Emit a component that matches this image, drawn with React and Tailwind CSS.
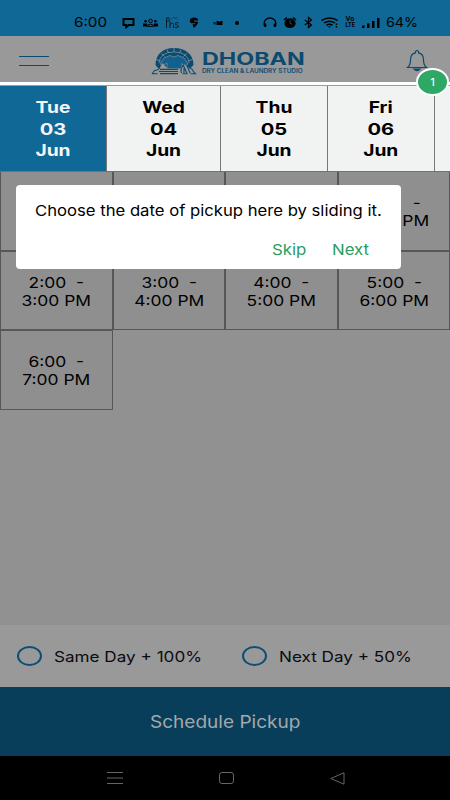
import clsx from 'clsx';

const days = [
    { day: 'Tue', date: '03', month: 'Jun', width: 'w-[107px]', active: true },
    { day: 'Wed', date: '04', month: 'Jun', width: 'w-[114px]' },
    { day: 'Thu', date: '05', month: 'Jun', width: 'w-[107px]' },
    { day: 'Fri', date: '06', month: 'Jun', width: 'w-[106.5px]' },
];

const slots = [
    [],
    [],
    [],
    [':00  -', 'PM'],
    ['2:00  -', '3:00 PM'],
    ['3:00  -', '4:00 PM'],
    ['4:00  -', '5:00 PM'],
    ['5:00  -', '6:00 PM'],
    ['6:00  -', '7:00 PM'],
];

function StatusBar() {
    return (
        <div className="h-9 bg-[#106897] flex items-start pt-[16px] text-black">
            <span className="ml-[74px] w-[48px] h-[13px] text-[13.5px] leading-[13px] origin-left scale-x-[1.13]">6:00</span>
            {/* message */}
            <svg className="w-[13px] h-[13px]" viewBox="0 0 13 13" fill="none" stroke="currentColor" strokeWidth="2">
                <path d="M1.5 3h10v6H6.800L4.200 11.200V9H1.500z" />
            </svg>
            {/* group */}
            <svg className="ml-[8px] w-[15px] h-[13px]" viewBox="0 0 15 13" fill="currentColor">
                <circle cx="2.6" cy="5.2" r="1.3" />
                <circle cx="12.4" cy="5.2" r="1.3" />
                <circle cx="7.5" cy="5" r="1.8" fill="none" stroke="currentColor" />
                <path d="M0 7.5h4v3H0zM11 7.5h4v3h-4z" />
                <path d="M4.4 10.4V9.2q3.1-2.2 6.2 0v1.2z" fill="none" stroke="currentColor" />
            </svg>
            <svg className="ml-[7px] w-[15px] h-[13px] opacity-70" viewBox="0 0 15 13" fill="none" stroke="currentColor">
                <path d="M1.500 12V2q3-1 3 1.200T1.500 5.500M5 12V5M5 8.500q3-2.500 3.500 0V12M13.500 7q-3-1-3.500.7 0 1.300 2 1.300 2 .5 1.300 2-1 1-3.500.300" />
                <path d="M6.500 3l2-1.500 1.500 1 1.500-1L13 3.500" strokeDasharray="1 1" />
            </svg>
            {/* pin */}
            <svg className="ml-[9px] w-[10px] h-[13px]" viewBox="0 0 10 13" fill="currentColor">
                <path d="M5 1.500c2.300 0 4.200 1.200 4.200 3H5v1.200h4Q9 8.500 4.800 12 3.600 9.500 3.600 8.300H6.500V7.200H2Q.6 6 .8 4.200 1.500 1.500 5 1.500z" />
            </svg>
            <svg className="ml-[14px] w-[10px] h-[13px]" viewBox="0 0 10 13" fill="currentColor">
                <path d="M0 6h3v2.500H0z" opacity=".5" />
                <path d="M3.500 5h2l1 1 1-1H9.500v4H3.500z" />
            </svg>
            <span className="ml-[12px] mt-[4.500px] size-[4px] rounded-full bg-black" />
            {/* headphones */}
            <svg className="ml-[24px] w-[14px] h-[13px]" viewBox="0 0 14 13" fill="none" stroke="currentColor" strokeWidth="1.300">
                <path d="M1.200 10V7a5.800 5 0 0 1 11.600 0v3" />
                <path d="M2.200 7.500v3.500M11.800 7.500v3.500" strokeWidth="2.200" />
            </svg>
            {/* alarm */}
            <svg className="ml-[6px] w-[14px] h-[13px]" viewBox="0 0 14 13" fill="currentColor">
                <ellipse cx="7" cy="7.200" rx="5.600" ry="4.900" />
                <path d="M1 4 4 1.500M13 4 10 1.500" stroke="currentColor" strokeWidth="1.600" />
                <path d="M7 4.500v2.800l2 1" fill="none" stroke="#106897" strokeWidth=".8" />
            </svg>
            <svg className="ml-[7px] w-[9px] h-[13px]" viewBox="0 0 9 13" fill="none" stroke="currentColor" strokeWidth="1.200">
                <path d="M.8 4 7.500 9 4.500 11.500v-10L7.500 4 .8 9" />
            </svg>
            {/* wifi */}
            <svg className="ml-[8px] w-[18px] h-[13px]" viewBox="0 0 18 13" fill="none" stroke="currentColor" strokeWidth="1.500">
                <path d="M.5 4.500q8-5 16 0M3 7q5.500-3.700 11 0M5.500 9.300q3-2 6 0" />
                <path d="m7 10.500 1.500 1.500 1.500-1.500z" fill="currentColor" stroke="none" />
                <path d="M15.500 7.500v1.500M15.500 10v1.500" strokeWidth="1.500" />
            </svg>
            <span className="ml-[6px] w-[10px] h-[12px] flex flex-col items-center text-[6px] leading-[6px] font-bold">
                <span className="scale-x-[1.100]">Vo</span>
                <span className="scale-x-[.900]">LTE</span>
            </span>
            {/* signal */}
            <svg className="ml-[7px] w-[18px] h-[13px]" viewBox="0 0 18 13" fill="currentColor">
                <path d="M0 9.500h2.500V12H0zM5 7.500h2.500V12H5zM10 5h2.500v7H10zM15 2h2.500v10H15z" />
            </svg>
            <span className="ml-[6px] h-[13px] text-[13.500px] leading-[13px] origin-left scale-x-[1.060]">64%</span>
        </div>
    );
}

function LogoMark() {
    return (
        <svg className="w-[46px] h-[28px]" viewBox="0 0 46 28" fill="none" stroke="#0b4b70">
            <path d="M4.500 18C4.500 7 12 1 23 1s19.500 6 19.500 17l-3 3H7z" fill="#0b4b70" stroke="none" />
            <path d="M8 16Q9 5 23 5t15 11" stroke="#8698a1" strokeWidth=".7" />
            <path d="M10.500 6.500l3 3M16 2.500l1.500 3.500M23 1v4M30 2.500L28.500 6M35.500 6.500l-3 3M5 12.500l4.500 1.500M41.500 12.500L37 14" stroke="#8698a1" strokeWidth=".8" />
            {/* shirt */}
            <path d="M13 11l6-2.500q4 3 8 0l6 2.500 4 6-4 2-2-2.500V22H16v-6l-4 3-3-2z" fill="#12608d" stroke="#8698a1" strokeWidth=".7" />
            {/* soap and towels */}
            <path d="M1 27l2.500-4q5 0 8-7l5 5.500h12V28z" fill="#999" stroke="none" />
            <path d="M1 27l2.500-3.500q4 0 5.500-3.500M1 26.800h5.500" strokeWidth="1.100" />
            <path d="M9 22.300h18M8 24.500h19M9 26.700h18" strokeWidth="1.200" />
            <path d="M29.500 27.500q-2-5 1-8l3-2 3 2.500q4 1 5.500 4l3 3.500z" fill="#999" stroke="none" />
            <path d="M30.500 26q-1.500-5 2-7.500l3.500 8.300h-4.500M33 21v5M36 18.500l3 7.500M38.500 21q3 .5 3.500 3l2.500 2.800h-5" strokeWidth="1.100" />
        </svg>
    );
}

function Header() {
    return (
        <div className="h-[46px] bg-[#999] flex items-start">
            <div className="ml-[19px] mt-[20px] w-[30px] h-[10px] border-y border-[#0b4b70]" />
            <div className="ml-[102px] mt-[11px] w-[48px]">
                <LogoMark />
            </div>
            <div className="ml-[3px] mt-[16px] w-[204px] text-[#0b4b70]">
                <div className="w-max text-[17px] leading-[15px] font-bold origin-left scale-x-[1.370]">DHOBAN</div>
                <div className="w-max mt-px text-[5.500px] leading-[7px] font-semibold whitespace-nowrap origin-left scale-x-[1.160]">DRY CLEAN &amp; LAUNDRY STUDIO</div>
            </div>
            <svg className="mt-[13px] w-[22px] h-[24px]" viewBox="0 0 22 24" fill="none" stroke="#0b4b70" strokeWidth="1.200">
                <path d="M1.500 18.500Q4.500 16 4.500 11q0-6.500 5-7.200V2.500q1.500-2 3 0v1.300q5 .7 5 7.200 0 5 3 7.500z" />
                <path d="M8 20q3 3 6 0z" fill="#0b4b70" />
            </svg>
        </div>
    );
}

function DateStrip() {
    return (
        <div className="relative h-[90px] bg-white pt-[3px]">
            <div className="h-[87px] flex overflow-hidden bg-[#f1f3f2] border-t border-b border-t-[#9c9c9c] border-b-[#6f7375]">
                {days.map((d) => (
                    <div
                        key={d.date}
                        className={clsx(
                            'shrink-0 border-r border-[#777] pt-[11px] text-center text-[16px] leading-[21.700px] font-bold',
                            d.width,
                            d.active ? 'bg-[#106897] text-[#f4f4f4]' : 'text-black'
                        )}
                    >
                        <div className="scale-x-[1.200]">{d.day}</div>
                        <div className="scale-x-[1.260]">{d.date}</div>
                        <div className="scale-x-[1.200]">{d.month}</div>
                    </div>
                ))}
            </div>
            <div className="absolute left-[416px] -top-[14px] w-[33px] h-[28px] rounded-[50%] border-2 border-white bg-[#2fa866] flex items-center justify-center text-[10px] font-medium text-white">
                1
            </div>
        </div>
    );
}

function SlotGrid() {
    return (
        <div className="-mt-px grid grid-cols-4 auto-rows-[79.700px]">
            {slots.map(([from, to], i) => (
                <div
                    key={i}
                    className={clsx(
                        'border border-[#55575a] bg-[#8f8f8f] pt-[22px] text-[14.500px] leading-[18px] text-black whitespace-pre',
                        i === 3 ? 'text-right' : 'text-center'
                    )}
                >
                    <div className={clsx('scale-x-[1.200]', i === 3 && 'origin-right pr-[24px]')}>{i === 3 ? '-' : from}</div>
                    <div className={clsx('scale-x-[1.200]', i === 3 && 'origin-right pr-[17px]')}>{to}</div>
                </div>
            ))}
        </div>
    );
}

function Tooltip() {
    return (
        <div className="absolute left-[16px] top-[185px] w-[385px] h-[84px] rounded-[4px] bg-white">
            <div className="ml-[19px] mt-[16px] w-max text-[15px] leading-[20px] text-black whitespace-nowrap origin-left scale-x-[1.111]">
                Choose the date of pickup here by sliding it.
            </div>
            <div className="mt-[19px] flex text-[15px] leading-[20px] text-[#2a9d61]">
                <span className="ml-[256px] w-[60px] origin-left scale-x-[1.120]">Skip</span>
                <span className="origin-left scale-x-[1.120]">Next</span>
            </div>
        </div>
    );
}

function Option({ label }) {
    return (
        <div className="w-[225px] flex items-center pl-[17px]">
            <span className="w-[25px] h-[20px] rounded-[50%] border-2 border-[#0b4f76]" />
            <span className="ml-[12px] mt-[2px] text-[14.500px] text-[#0b0b12] whitespace-nowrap origin-left scale-x-[1.180]">{label}</span>
        </div>
    );
}

function NavBar() {
    return (
        <div className="h-[44px] bg-black flex items-center text-[#666]">
            <svg className="ml-[107px] w-[16px] h-[12px]" viewBox="0 0 16 12" stroke="currentColor">
                <path d="M0 .5h16M0 6h16M0 11.500h16" />
            </svg>
            <div className="ml-[96px] w-[15px] h-[12px] rounded-[3px] border border-[#666]" />
            <svg className="ml-[96px] w-[15px] h-[13px]" viewBox="0 0 15 13" fill="none" stroke="currentColor" strokeLinejoin="round">
                <path d="M.8 6.500 14 .8v11.400z" />
            </svg>
        </div>
    );
}

export default function App() {
    return (
        <div className="relative w-[450px] h-[800px] overflow-hidden flex flex-col bg-[#919191] font-[Inter,'Liberation_Sans',sans-serif]">
            <StatusBar />
            <Header />
            <DateStrip />
            <SlotGrid />
            <div className="mt-auto h-[62px] bg-[#999] flex">
                <Option label="Same Day + 100%" />
                <Option label="Next Day + 50%" />
            </div>
            <div className="h-[69px] bg-[#093e5a] flex items-center justify-center pt-[2px] text-[17px] text-[#a3a9ac]">
                <span className="scale-x-[1.120]">Schedule Pickup</span>
            </div>
            <NavBar />
            <Tooltip />
        </div>
    );
}
